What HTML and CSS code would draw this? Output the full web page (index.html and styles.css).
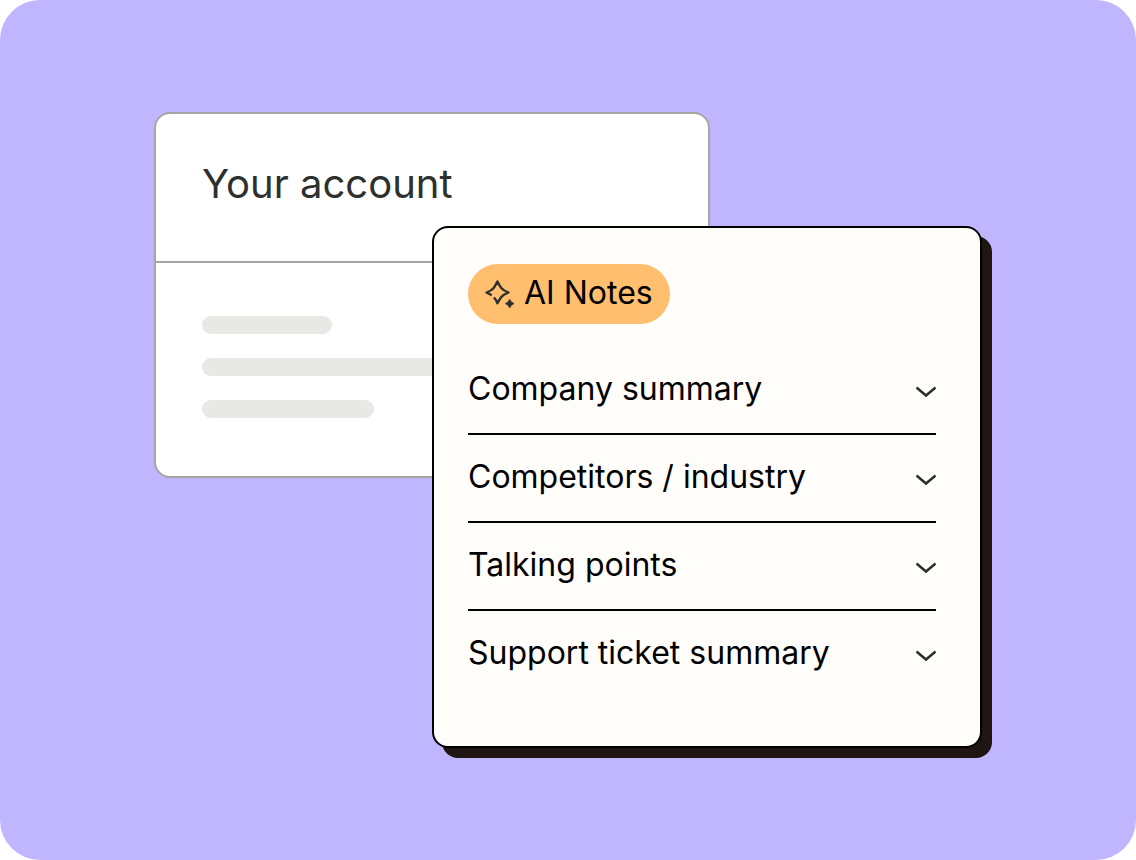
FILE: index.html
```html
<!DOCTYPE html>
<html lang="en">
<head>
<meta charset="utf-8">
<title>AI Notes</title>
<link rel="stylesheet" href="styles.css">
</head>
<body>
<main class="stage">
  <section class="account">
    <h1 class="account-title">Your account</h1>
    <div class="lines">
      <span class="line line-short"></span>
      <span class="line line-long"></span>
      <span class="line line-medium"></span>
    </div>
  </section>
  <section class="notes">
    <h2 class="badge">
      <svg class="spark" viewBox="0 0 32 32" aria-hidden="true">
        <path d="M7.800 18.300L2.500 15.500Q7.500 13.500 9.500 11.200Q11.500 8.500 13.400 4.500Q15.300 8.500 17.500 11.200Q19.500 13.500 24.500 15.500Q19.500 17.500 17.500 19.800Q15.300 22.500 13.400 26.300Q12.300 23 10 20.500" fill="none" stroke="#2d302e" stroke-width="2.400" stroke-linejoin="round"/>
        <path d="M25.700 22.300Q26.800 25.500 30 26.600Q26.800 27.700 25.700 30.900Q24.600 27.700 21.400 26.600Q24.600 25.500 25.700 22.300Z" fill="#2d302e" stroke="#2d302e" stroke-width=".8"/>
      </svg>
      AI Notes
    </h2>
    <ul class="topics">
      <li class="topic"><button class="toggle" type="button">Company summary<svg class="chevron" viewBox="0 0 20 12" aria-hidden="true"><path d="M0.500 1.500L10 9.500L19.500 1.500"/></svg></button></li>
      <li class="topic"><button class="toggle" type="button">Competitors / industry<svg class="chevron" viewBox="0 0 20 12" aria-hidden="true"><path d="M0.500 1.500L10 9.500L19.500 1.500"/></svg></button></li>
      <li class="topic"><button class="toggle" type="button">Talking points<svg class="chevron" viewBox="0 0 20 12" aria-hidden="true"><path d="M0.500 1.500L10 9.500L19.500 1.500"/></svg></button></li>
      <li class="topic"><button class="toggle" type="button">Support ticket summary<svg class="chevron" viewBox="0 0 20 12" aria-hidden="true"><path d="M0.500 1.500L10 9.500L19.500 1.500"/></svg></button></li>
    </ul>
  </section>
</main>
</body>
</html>
```
FILE: styles.css
```css
* { box-sizing: border-box; }
body { margin: 0; background: #fff; font-family: Inter, "Liberation Sans", sans-serif; }
.stage {
  display: grid;
  grid-template-columns: 278fr 278fr 272fr;
  align-items: start;
  min-height: 100vh;
  padding: 112px 154px 102px;
  border-radius: 40px;
  background: #c0b6ff;
}
.account {
  grid-area: 1 / 1 / 2 / 3;
  overflow: hidden;
  border: 2px solid #a6a5a2;
  border-radius: 16px;
  background: #fff;
}
.account-title {
  margin: 0;
  padding: 46px 46px 53px;
  border-bottom: 2px solid #a6a5a2;
  color: #2d302e;
  font-size: 40px;
  font-weight: 400;
  line-height: 48px;
}
.lines { display: flex; flex-direction: column; gap: 24px; padding: 53px 46px 58px; }
.line { height: 18px; border-radius: 9px; background: #e8e8e4; }
.line-short { width: 130px; }
.line-long { width: 300px; }
.line-medium { width: 172px; }
.notes {
  grid-area: 1 / 2 / 2 / 4;
  margin-top: 114px;
  padding: 36px 44px 49px 34px;
  border: 2px solid #000;
  border-radius: 16px;
  background: #fffdf9;
  box-shadow: 10px 10px 0 #1f1512;
}
.badge {
  display: flex;
  align-items: center;
  gap: 8px;
  width: fit-content;
  height: 60px;
  margin: 0 0 23px;
  padding: 0 17px 4px 16px;
  border-radius: 30px;
  background: #ffbf6e;
  color: #000;
  font-size: 32px;
  font-weight: 400;
}
.spark { width: 32px; height: 32px; margin-top: 2px; }
.topics { margin: 0; padding: 0; list-style: none; }
.topic + .topic { border-top: 2px solid #000; }
.toggle {
  display: flex;
  align-items: center;
  justify-content: space-between;
  width: 100%;
  height: 86px;
  padding: 0 0 4px;
  border: 0;
  background: none;
  color: #000;
  font: inherit;
  font-size: 32px;
}
.chevron { width: 20px; height: 12px; margin-top: 8px; overflow: visible; fill: none; stroke: #2d302e; stroke-width: 2.5; }
```
